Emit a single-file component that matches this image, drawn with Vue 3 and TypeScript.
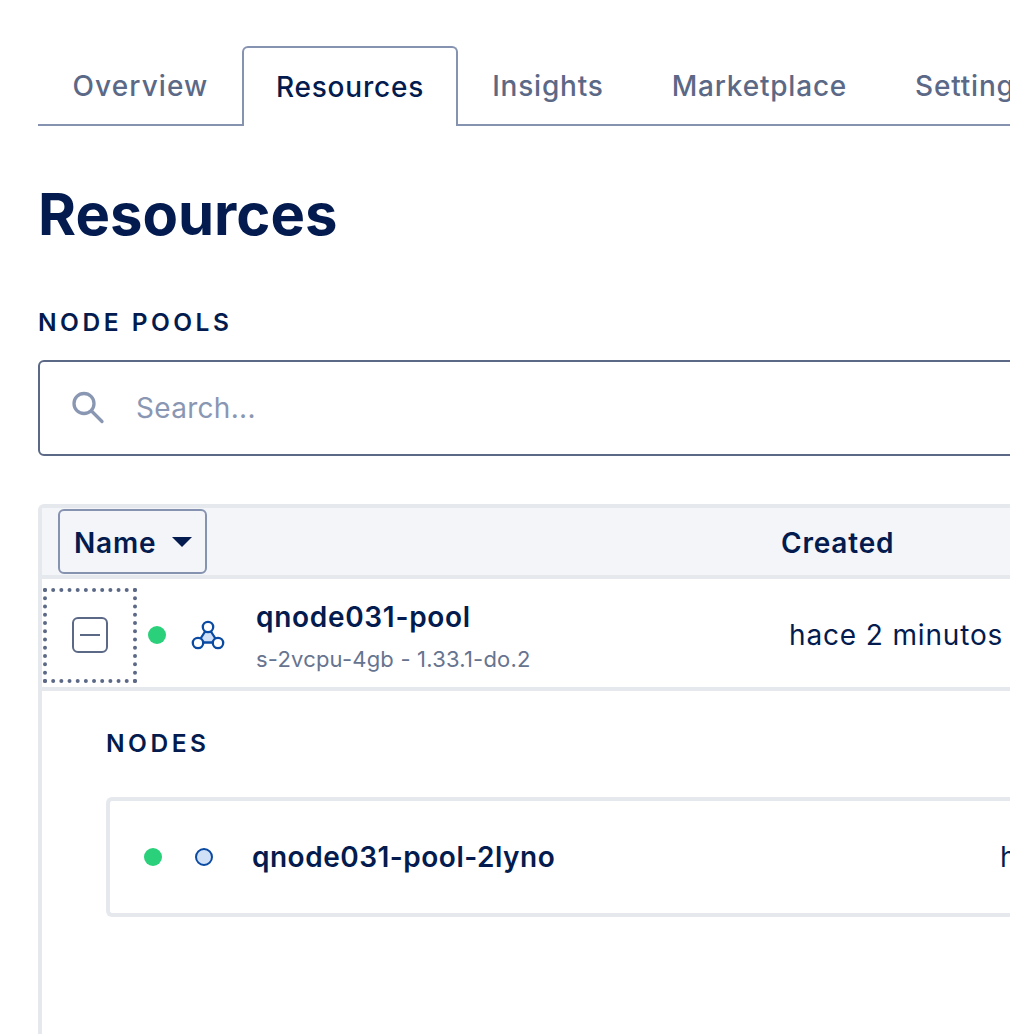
<template>
  <div class="page">
    <nav class="tabs">
      <a v-for="tab in tabs" :key="tab" class="tab" :class="{ active: tab === 'Resources' }">{{ tab }}</a>
      <span class="tab-rest"></span>
    </nav>

    <h1 class="title">Resources</h1>

    <h2 class="section-label">NODE POOLS</h2>
    <div class="search">
      <svg class="search-icon" width="34" height="34" viewBox="0 0 34 34" fill="none">
        <circle cx="12" cy="12.5" r="10" stroke="#8a97b3" stroke-width="3.3" />
        <path d="M19.5 20l10.5 10.5" stroke="#8a97b3" stroke-width="3.3" stroke-linecap="round" />
      </svg>
      <span class="placeholder">Search...</span>
    </div>

    <section class="table">
      <div class="table-head">
        <button class="sort"><span class="sort-label">Name</span><span class="caret"></span></button>
        <span class="head-created">Created</span>
      </div>

      <div class="pool-row">
        <span class="toggle">
          <span class="minus"></span>
        </span>
        <span class="dot"></span>
        <svg class="pool-icon" width="36" height="32" viewBox="0 0 36 32" fill="none">
          <path d="M18 8L8 23.5h20z" fill="#cfe0f7" stroke="#0b4aa2" stroke-width="2.3" />
          <circle cx="18" cy="8" r="5.2" fill="#fff" stroke="#0b4aa2" stroke-width="2.3" />
          <circle cx="8" cy="24" r="5.2" fill="#fff" stroke="#0b4aa2" stroke-width="2.3" />
          <circle cx="28" cy="24" r="5.2" fill="#fff" stroke="#0b4aa2" stroke-width="2.3" />
        </svg>
        <div class="pool-name">
          <strong>qnode031-pool</strong>
          <small>s-2vcpu-4gb - 1.33.1-do.2</small>
        </div>
        <span class="pool-created">hace 2 minutos</span>
      </div>

      <div class="nodes">
        <h3 class="section-label">NODES</h3>
        <div class="node-card">
          <span class="dot"></span>
          <span class="node-icon"></span>
          <strong class="node-name">qnode031-pool-2lyno</strong>
          <span class="node-created">hace 2 minutos</span>
        </div>
      </div>
    </section>
  </div>
</template>

<script setup lang="ts">
const tabs: string[] = ["Overview", "Resources", "Insights", "Marketplace", "Settings"];
</script>

<style>
html,
body {
  margin: 0;
  overflow: hidden;
  background: #fff;
}
</style>

<style scoped>
.page {
  width: 1200px;
  height: 1034px;
  box-sizing: border-box;
  padding: 46px 0 0 38px;
  overflow: hidden;
  font-family: Inter, "Liberation Sans", sans-serif;
  color: #031b4e;
}
.tabs {
  display: flex;
  height: 80px;
  align-items: stretch;
}
.tab {
  display: flex;
  align-items: center;
  padding: 0 34px;
  font-size: 28px;
  letter-spacing: 0.8px;
  font-weight: 500;
  color: #5b6987;
  border-bottom: 2px solid #8592b0;
  border-top: 2px solid transparent;
}
.tab:first-child {
  padding: 0 33.5px 0 34.5px;
  letter-spacing: 1.1px;
}
.tab.active {
  color: #031b4e;
  border: 2px solid #8592b0;
  border-bottom: none;
  border-radius: 6px 6px 0 0;
  padding: 0 32px;
}
.tab-rest {
  flex: 1;
  border-bottom: 2px solid #8592b0;
}
.title {
  margin: 50px 0 0;
  font-size: 58px;
  line-height: 76px;
  font-weight: 700;
}
.section-label {
  margin: 0;
  font-size: 24.5px;
  line-height: 30px;
  font-weight: 600;
  letter-spacing: 3.5px;
}
.page > .section-label {
  margin-top: 55px;
}
.search {
  margin-top: 23px;
  height: 96px;
  box-sizing: border-box;
  border: 2px solid #5b6987;
  border-radius: 6px;
  display: flex;
  align-items: center;
  padding-left: 32px;
  gap: 30px;
}
.placeholder {
  font-size: 28px;
  letter-spacing: 0.3px;
  color: #8a97b3;
}
.table {
  margin-top: 48px;
  height: 600px;
  border-left: 4px solid #e5e8ed;
  border-top: 4px solid #e5e8ed;
  border-radius: 6px 0 0 0;
}
.table-head {
  height: 67px;
  background: #f3f5f9;
  border-bottom: 4px solid #e5e8ed;
  display: flex;
  align-items: center;
  padding-left: 16px;
  font-size: 28px;
  letter-spacing: 0.8px;
  font-weight: 600;
}
.sort {
  width: 149px;
  height: 65px;
  box-sizing: border-box;
  border: 2px solid #8592b0;
  border-radius: 6px;
  background: transparent;
  color: inherit;
  font: inherit;
  letter-spacing: inherit;
  display: flex;
  align-items: center;
  gap: 16px;
  padding: 0 14px;
}
.sort-label,
.head-created {
  padding-top: 2px;
}
.caret {
  width: 0;
  height: 0;
  border-left: 10px solid transparent;
  border-right: 10px solid transparent;
  border-top: 10px solid #031b4e;
}
.head-created {
  margin-left: 574px;
}
.pool-row {
  height: 104px;
  padding-top: 4px;
  border-bottom: 4px solid #e5e8ed;
  display: flex;
  align-items: center;
}
.toggle {
  width: 94px;
  height: 95px;
  margin-left: 1px;
  box-sizing: border-box;
  border: 4px dotted #5b6987;
  display: flex;
  align-items: center;
  justify-content: center;
}
.minus {
  width: 36px;
  height: 36px;
  box-sizing: border-box;
  border: 2.5px solid #5b6987;
  border-radius: 6px;
  display: flex;
  align-items: center;
  justify-content: center;
}
.minus::before {
  content: "";
  width: 20px;
  height: 2.5px;
  background: #5b6987;
}
.dot {
  width: 18px;
  height: 18px;
  border-radius: 50%;
  background: #2ad07a;
  flex: none;
}
.pool-row .dot {
  margin-left: 11px;
}
.pool-icon {
  margin-left: 24px;
  flex: none;
}
.pool-name {
  margin-left: 30px;
  display: flex;
  flex-direction: column;
  width: 533px;
}
.pool-name strong {
  margin-top: 3px;
  font-size: 28px;
  letter-spacing: 0.7px;
  line-height: 36px;
  font-weight: 600;
}
.pool-name small {
  font-size: 22px;
  letter-spacing: 0.2px;
  line-height: 30px;
  margin-top: 9px;
  color: #66748f;
}
.pool-created {
  font-size: 28px;
  letter-spacing: 0.85px;
  white-space: nowrap;
}
.nodes {
  padding: 37px 0 0 64px;
}
.node-card {
  margin-top: 39px;
  height: 120px;
  box-sizing: border-box;
  border: 4px solid #e5e8ed;
  border-right: none;
  border-radius: 6px 0 0 6px;
  display: flex;
  align-items: center;
  padding-left: 34px;
}
.node-icon {
  flex: none;
  width: 18px;
  height: 18px;
  box-sizing: border-box;
  border: 2px solid #0b4aa2;
  border-radius: 50%;
  background: #cfe0f7;
  margin-left: 33px;
}
.node-name {
  flex: none;
  margin-left: 39px;
  font-size: 28px;
  letter-spacing: 0.5px;
  font-weight: 600;
  width: 748px;
}
.node-created {
  flex: none;
  font-size: 28px;
  letter-spacing: 0.85px;
  white-space: nowrap;
}
</style>
